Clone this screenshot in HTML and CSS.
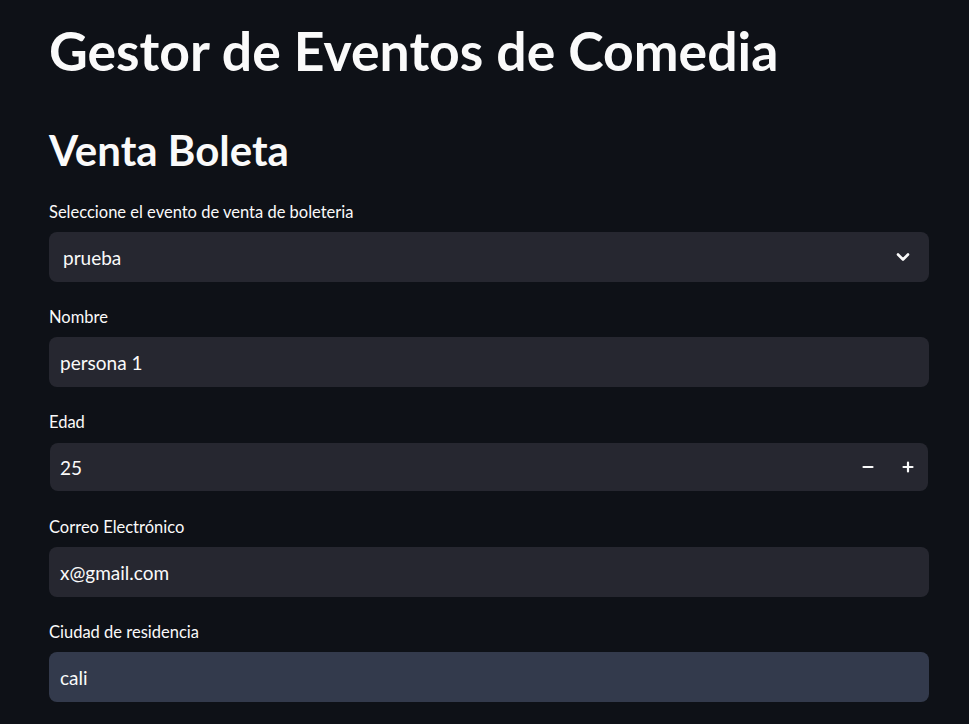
FILE: index.html
```html
<!DOCTYPE html>
<html lang="es">
<head>
<meta charset="utf-8">
<title>Gestor de Eventos de Comedia</title>
<link rel="stylesheet" href="styles.css">
</head>
<body>
<main class="main">
  <h1 class="title">Gestor de Eventos de Comedia</h1>
  <h2 class="subtitle">Venta Boleta</h2>

  <div class="field">
    <label class="label">Seleccione el evento de venta de boleteria</label>
    <div class="box select">
      <span class="value">prueba</span>
      <svg class="chevron" width="14" height="10" viewBox="0 0 14 10"><path d="M2 2.5 L7 7.5 L12 2.5" fill="none" stroke="#fafafa" stroke-width="2.6" stroke-linecap="round" stroke-linejoin="round"/></svg>
    </div>
  </div>

  <div class="field">
    <label class="label">Nombre</label>
    <div class="box input"><span class="value">persona 1</span></div>
  </div>

  <div class="field">
    <label class="label">Edad</label>
    <div class="num-wrap">
      <div class="box number">
        <span class="value grow">25</span>
        <span class="step"><svg width="12" height="12" viewBox="0 0 12 12"><path d="M1.5 6 H10.5" stroke="#fafafa" stroke-width="2.2" stroke-linecap="round"/></svg></span>
        <span class="step"><svg width="12" height="12" viewBox="0 0 12 12"><path d="M1.5 6 H10.5 M6 1.5 V10.5" stroke="#fafafa" stroke-width="2.2" stroke-linecap="round"/></svg></span>
      </div>
    </div>
  </div>

  <div class="field">
    <label class="label">Correo Electrónico</label>
    <div class="box input"><span class="value">x@gmail.com</span></div>
  </div>

  <div class="field">
    <label class="label">Ciudad de residencia</label>
    <div class="box input hover"><span class="value">cali</span></div>
  </div>
</main>
</body>
</html>
```

FILE: styles.css
```css
html, body {
  margin: 0;
  padding: 0;
  background: #0e1117;
  color: #fafafa;
  font-family: "Lato", "Noto Sans", sans-serif;
}

.main {
  width: 880px;
  padding: 18px 0 0 49px;
}

.title {
  margin: 0;
  font-size: 53.5px;
  line-height: 64px;
  font-weight: 700;
}

.subtitle {
  margin: 43px 0 27px;
  font-size: 42px;
  line-height: 50px;
  font-weight: 700;
}

.field {
  margin-bottom: 25px;
}

.label {
  display: block;
  font-size: 16.5px;
  line-height: 20px;
  margin-bottom: 10px;
}

.box {
  height: 50px;
  box-sizing: border-box;
  background: #262730;
  border-radius: 8px;
  display: flex;
  align-items: center;
  font-size: 19px;
}

.select {
  padding: 0 19px 0 14px;
  justify-content: space-between;
}

.input {
  padding: 0 11px;
}

.hover {
  background: #333a4c;
}

.num-wrap {
  padding: 1px;
}

.number {
  height: 48px;
  padding: 0 0 0 10px;
  border-radius: 8px;
}

.grow {
  flex: 1;
}

.step {
  width: 40px;
  height: 48px;
  display: flex;
  align-items: center;
  justify-content: center;
}
```
